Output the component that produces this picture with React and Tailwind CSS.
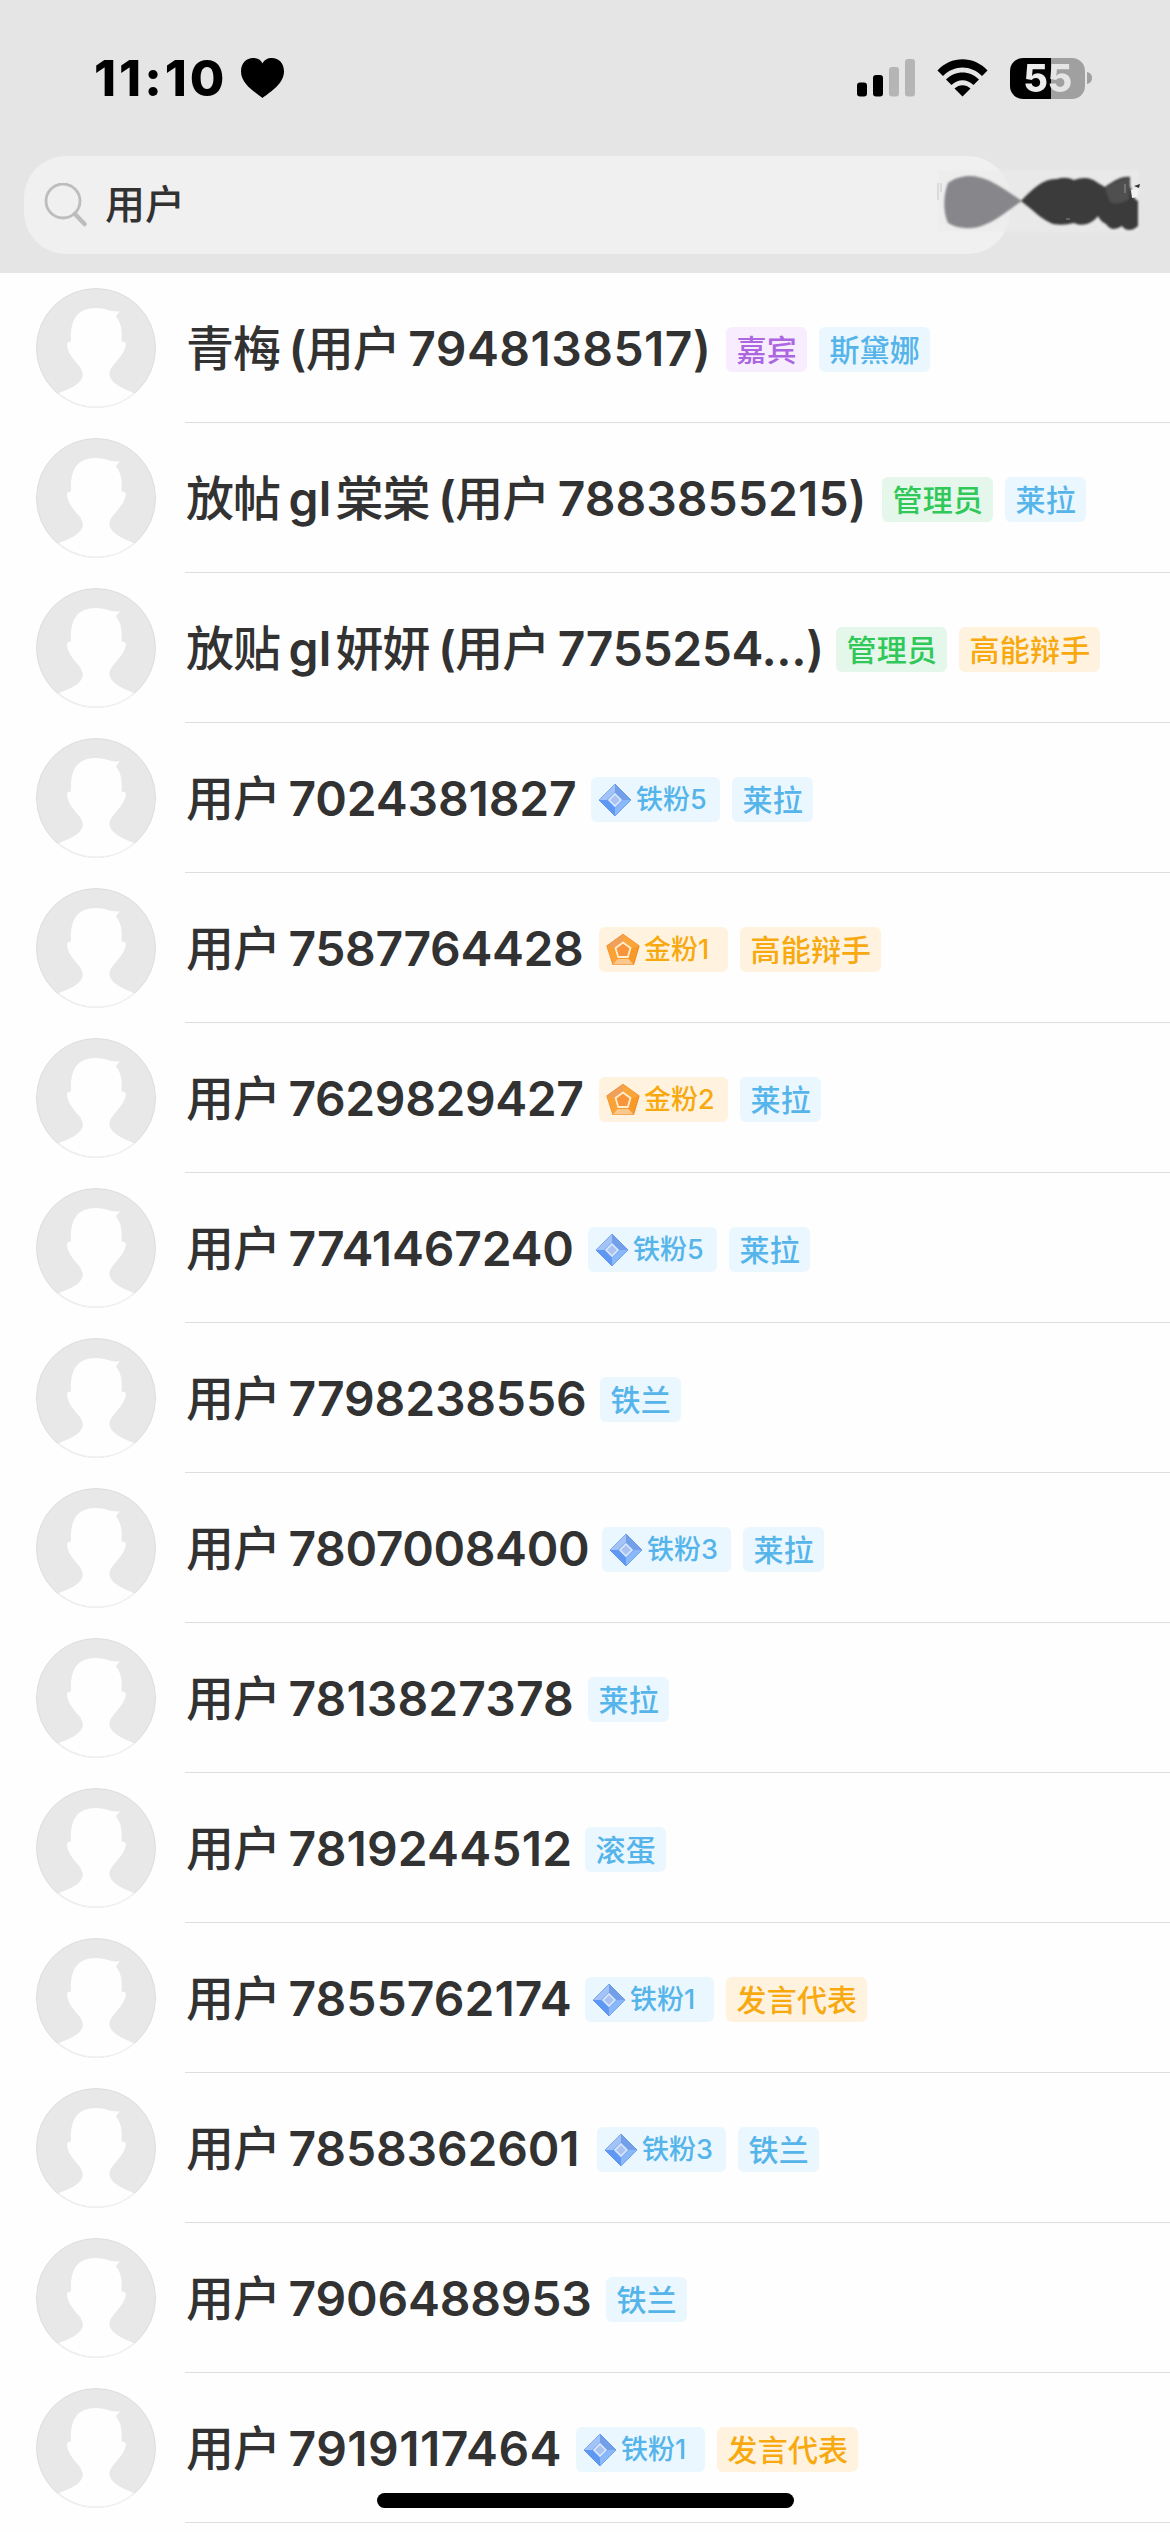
import React from "react";

const latin = "font-['Inter','Noto_Sans_CJK_SC',sans-serif]";

const rows = [
  { name: [["c", "青梅"], ["p", "("], ["n", "用户"], ["l", "7948138517)"]], w: "w-[526px]", t: "tracking-[0.45px]", tags: [["purple", "嘉宾"], ["blue", "斯黛娜"]] },
  { name: [["c", "放帖"], ["p", "gl"], ["c2", "棠棠"], ["p", "("], ["n", "用户"], ["l", "7883855215)"]], w: "w-[682px]", t: "tracking-[0.05px]", tags: [["green", "管理员"], ["blue", "莱拉"]] },
  { name: [["c", "放贴"], ["p", "gl"], ["c2", "妍妍"], ["p", "("], ["n", "用户"], ["l", "7755254...)"]], w: "w-[636px]", t: "tracking-[-0.4px]", tags: [["green", "管理员"], ["gold", "高能辩手"]] },
  { name: [["c", "用户"], ["l", "7024381827"]], w: "w-[391px]", t: "tracking-[-0.15px]", tags: [["iron", "铁粉5"], ["blue", "莱拉"]] },
  { name: [["c", "用户"], ["l", "7587764428"]], w: "w-[399px]", t: "tracking-[-0.4px]", tags: [["golden", "金粉1"], ["gold", "高能辩手"]] },
  { name: [["c", "用户"], ["l", "7629829427"]], w: "w-[399px]", t: "tracking-[-0.4px]", tags: [["golden", "金粉2"], ["blue", "莱拉"]] },
  { name: [["c", "用户"], ["l", "7741467240"]], w: "w-[388px]", t: "tracking-[-0.2px]", tags: [["iron", "铁粉5"], ["blue", "莱拉"]] },
  { name: [["c", "用户"], ["l", "7798238556"]], w: "w-[400px]", t: "tracking-[-0.15px]", tags: [["blue", "铁兰"]] },
  { name: [["c", "用户"], ["l", "7807008400"]], w: "w-[402px]", t: "tracking-[-0.4px]", tags: [["iron", "铁粉3"], ["blue", "莱拉"]] },
  { name: [["c", "用户"], ["l", "7813827378"]], w: "w-[388px]", t: "tracking-[0.1px]", tags: [["blue", "莱拉"]] },
  { name: [["c", "用户"], ["l", "7819244512"]], w: "w-[385px]", t: "tracking-[0.15px]", tags: [["blue", "滚蛋"]] },
  { name: [["c", "用户"], ["l", "7855762174"]], w: "w-[385px]", t: "tracking-[0.05px]", tags: [["iron", "铁粉1"], ["gold", "发言代表"]] },
  { name: [["c", "用户"], ["l", "7858362601"]], w: "w-[397px]", t: "tracking-[-0.15px]", tags: [["iron", "铁粉3"], ["blue", "铁兰"]] },
  { name: [["c", "用户"], ["l", "7906488953"]], w: "w-[406px]", t: "tracking-[-0.2px]", tags: [["blue", "铁兰"]] },
  { name: [["c", "用户"], ["l", "7919117464"]], w: "w-[376px]", t: "tracking-[0.45px]", tags: [["iron", "铁粉1"], ["gold", "发言代表"]] },
];

const tagStyle = {
  purple: "text-[#ab66e0] bg-[#f8edfe]",
  blue: "text-[#55b4ea] bg-[#ebf7fe]",
  green: "text-[#31c85a] bg-[#e4f7ea]",
  gold: "text-[#f7a90f] bg-[#fff3e0]",
  iron: "text-[#55b4ea] bg-[#ebf7fe]",
  golden: "text-[#f7a90f] bg-[#fff3e0]",
};

const partStyle = {
  c: "mr-[8.5px] font-medium tracking-[-1px]",
  c2: "ml-[4px] mr-[8.5px] font-medium tracking-[-1px]",
  n: "ml-[-1px] mr-[8.5px] font-medium tracking-[-1px]",
  p: "tracking-[0.2px]",
  l: "",
};

function Diamond() {
  return (
    <svg className="h-[34px] w-[34px] shrink-0" viewBox="0 0 34 34">
      <path d="M17 1 33 17 17 33 1 17Z" fill="#6ba1f2" stroke="#5b93ea" strokeWidth="1" strokeLinejoin="round" />
      <path d="M17 1 33 17H25L17 9Z" fill="#739fe8" />
      <path d="M17 1V9L9 17H1Z" fill="#a3c2f5" />
      <path d="M1 17H9L17 25V33Z" fill="#5f98f2" />
      <path d="M17 33V25L25 17H33Z" fill="#8ab8f8" />
      <path d="M17 11 23 17 17 23 11 17Z" fill="#a9c2f0" stroke="#d9e8fc" strokeWidth="1.6" />
    </svg>
  );
}

function Pentagon() {
  return (
    <svg className="h-[34px] w-[34px] shrink-0" viewBox="0 0 34 34">
      <path d="M17 1.500 33 13 27.500 31.500H7L1 13Z" fill="#f99a28" stroke="#ef8d2a" strokeWidth="1.2" strokeLinejoin="round" />
      <path d="M17 1.500V8.500L8 15 1 13Z" fill="#f0a058" />
      <path d="M17 1.500 33 13 26 15 17 8.500Z" fill="#fba63a" />
      <path d="M1 13 8 15 11.500 26 7 31.500Z" fill="#fba236" />
      <path d="M7 31.500 11.500 26H22.500L27.500 31.500Z" fill="#fcc78c" />
      <path d="M17 9.500 24.500 15 21.800 24H12.200L9.500 15Z" fill="#f8953a" stroke="#fff0d2" strokeWidth="1.8" strokeLinejoin="round" />
    </svg>
  );
}

function Tag({ kind, text }) {
  const leveled = kind === "iron" || kind === "golden";
  return (
    <span
      className={`flex h-[45px] shrink-0 items-center whitespace-nowrap rounded-[6px] font-medium leading-none ${tagStyle[kind]} ${
        leveled ? "w-[129px] gap-[4px] pl-[7px] text-[27px]" : "pl-[10.5px] pr-[10px] text-[30px] tracking-[0.2px]"
      }`}
    >
      {kind === "iron" && <Diamond />}
      {kind === "golden" && <Pentagon />}
      <span>{text}</span>
    </span>
  );
}

function Avatar() {
  return (
    <svg className="mt-[15px] h-[120px] w-[120px] shrink-0" viewBox="0 0 120 120">
      <circle cx="60" cy="60" r="59.5" fill="#e8e8e8" stroke="#dedede" />
      <path
        d="M23 105C33 101 44 97 46.500 89C47.500 85 45.500 82 44 79C37 71 31 64 31 56Q31 54 35 53.500C34 33 40 20 60 20C69 20 74 24 84 23.500Q81 26 80 28.500C86 36 86 44 85.500 53.500Q90 54 90 56C89 65 82 71 76 79C74 82 72.500 85 74 89C77 97 89 101 98.500 105.500A59 59 0 0 1 23 105Z"
        fill="#fefefe"
      />
      <path d="M22 105.500A59.500 59.500 0 0 0 98 105.500" fill="none" stroke="#f0f0f0" strokeWidth="1.500" />
    </svg>
  );
}

function Row({ row }) {
  return (
    <li className="flex h-[150px] pl-[36px]">
      <Avatar />
      <div className="ml-[29px] flex grow items-center border-b border-[#dedede]">
        <span className={`ml-[1px] mr-[14px] mt-[3px] flex shrink-0 items-baseline whitespace-nowrap text-[48px] font-semibold leading-[70px] text-[#323232] ${row.w}`}>
          {row.name.map(([kind, text], i) => (
            <span key={i} className={kind === "l" ? row.t : partStyle[kind]}>
              {text}
            </span>
          ))}
        </span>
        <div className="mt-[4px] flex gap-[12px]">
          {row.tags.map(([kind, text]) => (
            <Tag key={text} kind={kind} text={text} />
          ))}
        </div>
      </div>
    </li>
  );
}

function StatusBar() {
  return (
    <div className="flex h-[156px] items-center pl-[94px] pr-[78px]">
      <span className="w-[131px] whitespace-nowrap text-[50px] font-extrabold leading-none tracking-[3px] text-black">11:10</span>
      <svg className="ml-[16px] h-[40px] w-[43px]" viewBox="0 0 43 40">
        <path d="M21.500 40C14 34 0 26 0 13.500C0 5 5.500 0 12 0C16.500 0 20 2 21.500 5.500C23 2 26.500 0 31 0C37.500 0 43 5 43 13.500C43 26 29 34 21.500 40Z" fill="#000" />
      </svg>
      <div className="ml-auto flex items-center">
        <svg className="h-[38px] w-[58px]" viewBox="0 0 58 38">
          <rect x="0" y="23.500" width="10" height="14" rx="3" />
          <rect x="16" y="16" width="10" height="21.500" rx="3" />
          <rect x="32" y="8" width="10" height="29.500" rx="3" fill="#b5b5b5" />
          <rect x="48" y="0" width="10" height="37.500" rx="3" fill="#b5b5b5" />
        </svg>
        <svg className="ml-[22px] h-[38px] w-[51px]" viewBox="0 0 51 38">
          <path d="M0.500 11.500C14 -3.500 37 -3.500 50.500 11.500L45 17C34 5.500 17 5.500 6 17Z" />
          <path d="M9 20.500C18 11 33 11 42 20.500L36.500 26C30 19.500 21 19.500 14.500 26Z" />
          <path d="M17.500 29.500C22 25 29 25 33.500 29.500L25.500 37.500Z" />
        </svg>
        <div className="ml-[22px] flex h-[41px] w-[75px] items-center justify-center rounded-[13px] bg-[linear-gradient(90deg,#000_55%,#a0a0a0_55%)] text-[38px] font-extrabold leading-none tracking-[-0.5px]">
          <span className="bg-[linear-gradient(90deg,#ededed_53%,#e5e5e5_53%)] bg-clip-text text-transparent">55</span>
        </div>
        <svg className="ml-[2px] h-[12px] w-[5px]" viewBox="0 0 5 12">
          <path d="M0 0Q5 1 5 6T0 12Z" fill="#a0a0a0" />
        </svg>
      </div>
    </div>
  );
}

function Smudge() {
  return (
    <svg className="absolute left-[937px] top-[8px] h-[72px] w-[206px]" viewBox="0 0 206 72">
      <defs>
        <filter id="soft" x="-10%" y="-10%" width="120%" height="120%">
          <feGaussianBlur stdDeviation="1" />
        </filter>
      </defs>
      <rect x="1" y="6" width="201" height="62" fill="#ececec" opacity="0.6" filter="url(#soft)" />
      <g filter="url(#soft)">
        <path d="M11 19C25 9 40 11 53 17C65 23 74 30 85 37C71 46 60 56 47 61C35 66 21 65 11 59C6 48 6 32 11 19Z" fill="#86868b" />
        <path d="M84 37C96 24 107 14 120 15Q129 12 137 16Q151 11 161 19L168 23C177 17 184 12 193 13V22L198 35L201 37V62L197 65Q189 68 185 62Q175 69 169 60Q163 57 161 52C155 60 145 63 137 59Q126 62 116 60C104 55 97 47 84 37Z" fill="#3b3b3b" />
        <path d="M168 25Q181 15 192 14V35Q181 42 173 38Z" fill="#505050" />
      </g>
      <path d="M188 20V29M129 55H133" stroke="#8a8a8a" strokeWidth="1.200" />
      <path d="M1 19V36M4 19V28" stroke="#d4d4d4" strokeWidth="1.500" />
      <path d="M194 26 202 24 200 33 195 34Z" fill="#f2f2f2" />
      <path d="M197 22 203 20 202 24Z" fill="#333" />
    </svg>
  );
}

function SearchBar() {
  return (
    <div className="relative h-[117px] pl-[24px]">
      <div className="flex h-[98px] w-[986px] items-center rounded-[42px] bg-[#f0f0f0] pl-[20px]">
        <svg className="h-[44px] w-[44px]" viewBox="0 0 44 44" fill="none" stroke="#bdbdbd">
          <ellipse cx="19" cy="18" rx="17" ry="17" strokeWidth="2.800" />
          <path d="M31 31 40.500 41" strokeWidth="4.500" strokeLinecap="round" />
        </svg>
        <span className="ml-[17px] text-[40px] font-medium leading-none text-[#323232]">用户</span>
      </div>
      <Smudge />
    </div>
  );
}

export default function App() {
  return (
    <main className={`relative h-[2532px] w-[1170px] overflow-hidden bg-[#fefefe] ${latin}`}>
      <header className="h-[273px] bg-[#e5e5e5]">
        <StatusBar />
        <SearchBar />
      </header>
      <ul>
        {rows.map((row) => (
          <Row key={row.name[row.name.length - 1][1]} row={row} />
        ))}
      </ul>
      <div className="absolute bottom-[24px] left-[377px] h-[15px] w-[417px] rounded-full bg-black" />
    </main>
  );
}
